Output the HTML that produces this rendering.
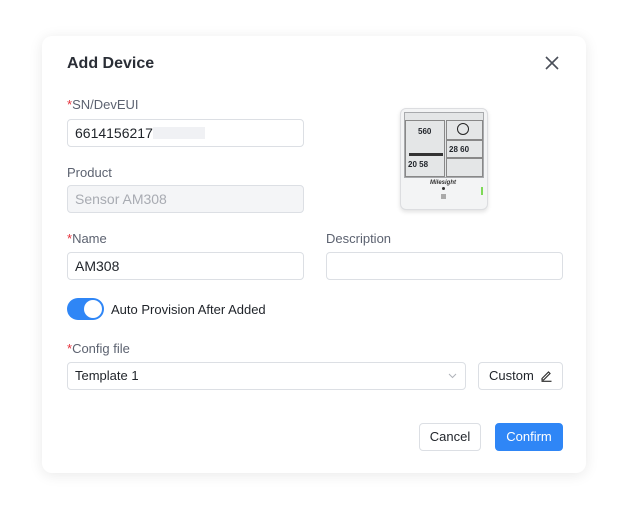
<!DOCTYPE html>
<html><head><style>
*{box-sizing:border-box;margin:0;padding:0}
body{width:624px;height:508px;background:#fff;font-family:"Liberation Sans",sans-serif;position:relative;overflow:hidden;color:#1f2329}
.card{position:absolute;left:42px;top:36px;width:544px;height:437px;background:#fff;border-radius:10px;box-shadow:0 2px 14px rgba(0,0,0,0.09)}
.a{position:absolute}
.lbl{font-size:13px;color:#5c6270}
.lbl b{color:#e5303a;font-weight:normal}
.in{position:absolute;height:28px;border:1px solid #dcdfe4;border-radius:4px;font-size:14px;line-height:26px;padding-left:7px;background:#fff}
.btn{position:absolute;height:28px;border:1px solid #dcdfe4;border-radius:4px;font-size:13px;line-height:26px;text-align:center;background:#fff}
</style></head><body>
<div class="card"></div>
<div class="a" style="left:67px;top:55px;font-size:16px;font-weight:bold;color:#2a2e36">Add Device</div>
<svg class="a" style="left:544px;top:55px" width="16" height="16" viewBox="0 0 16 16"><path d="M2 2L14 14M14 2L2 14" stroke="#4a4f59" stroke-width="1.6"/></svg>

<div class="a lbl" style="left:67px;top:97px"><b>*</b>SN/DevEUI</div>
<div class="in" style="left:67px;top:119px;width:237px">6614156217<span style="display:inline-block;width:52px;height:12px;background:#f0f1f4;vertical-align:-1px"></span></div>
<div class="a lbl" style="left:67px;top:165px">Product</div>
<div class="in" style="left:67px;top:185px;width:237px;background:#f4f5f7;color:#a8abb2">Sensor AM308</div>
<div class="a lbl" style="left:67px;top:231px"><b>*</b>Name</div>
<div class="in" style="left:67px;top:252px;width:237px">AM308</div>
<div class="a lbl" style="left:326px;top:231px">Description</div>
<div class="in" style="left:326px;top:252px;width:237px"></div>

<div class="a" style="left:67px;top:298px;width:37px;height:22px;border-radius:11px;background:#2f86f6"><div style="position:absolute;right:2px;top:2px;width:18px;height:18px;border-radius:50%;background:#fff"></div></div>
<div class="a" style="left:111px;top:302px;font-size:13px;color:#1f2329">Auto Provision After Added</div>

<div class="a lbl" style="left:67px;top:341px"><b>*</b>Config file</div>
<div class="in" style="left:67px;top:362px;width:399px;font-size:13px">Template 1</div>
<svg class="a" style="left:448px;top:373px" width="9" height="6" viewBox="0 0 9 6"><path d="M1 1L4.5 4.5L8 1" stroke="#b0b3ba" fill="none"/></svg>
<div class="btn" style="left:478px;top:362px;width:85px;text-align:left;padding-left:10px">Custom <svg width="13" height="13" viewBox="0 0 13 13" style="vertical-align:-2px;margin-left:3px"><path d="M2 9.5L8.5 3L10 4.5L3.5 11H2Z" stroke="#333" fill="none" stroke-width="1.2"/><path d="M1.5 12.3H11.5" stroke="#333" stroke-width="1.2"/></svg></div>

<div class="btn" style="left:419px;top:423px;width:62px">Cancel</div>
<div class="btn" style="left:495px;top:423px;width:68px;background:#2f86f6;border-color:#2f86f6;color:#fff">Confirm</div>

<!-- device -->
<div class="a" style="left:400px;top:108px;width:88px;height:102px;border-radius:6px;background:#f3f4f5;border:1px solid #dcdde0;box-shadow:0 2px 4px rgba(0,0,0,0.12)"></div>
<div class="a" style="left:404px;top:112px;width:80px;height:66px;background:#e4e6e7;border:1px solid #a8aaad"></div>
<div class="a" style="left:405px;top:120px;width:40px;height:57px;border:1px solid #888"></div>
<div class="a" style="left:446px;top:120px;width:37px;height:20px;border:1px solid #888"></div>
<div class="a" style="left:446px;top:140px;width:37px;height:18px;border:1px solid #888"></div>
<div class="a" style="left:446px;top:158px;width:37px;height:19px;border:1px solid #888"></div>
<div class="a" style="left:418px;top:127px;font-size:8px;font-weight:bold">560</div>
<div class="a" style="left:457px;top:123px;width:12px;height:12px;border:1.5px solid #222;border-radius:50%"></div>
<div class="a" style="left:449px;top:145px;font-size:8px;font-weight:bold">28 60</div>
<div class="a" style="left:408px;top:160px;font-size:8px;font-weight:bold">20 58</div>
<div class="a" style="left:409px;top:150px;width:34px;height:6px;border-bottom:3px solid #333"></div>
<div class="a" style="left:430px;top:180px;font-size:6px;font-style:italic;font-weight:bold;color:#333">Milesight</div>
<div class="a" style="left:442px;top:187px;width:3px;height:3px;border-radius:50%;background:#333"></div>
<div class="a" style="left:441px;top:194px;width:5px;height:5px;background:#aaa"></div>
<div class="a" style="left:481px;top:187px;width:2px;height:8px;background:#7ed957"></div>
</body></html>
